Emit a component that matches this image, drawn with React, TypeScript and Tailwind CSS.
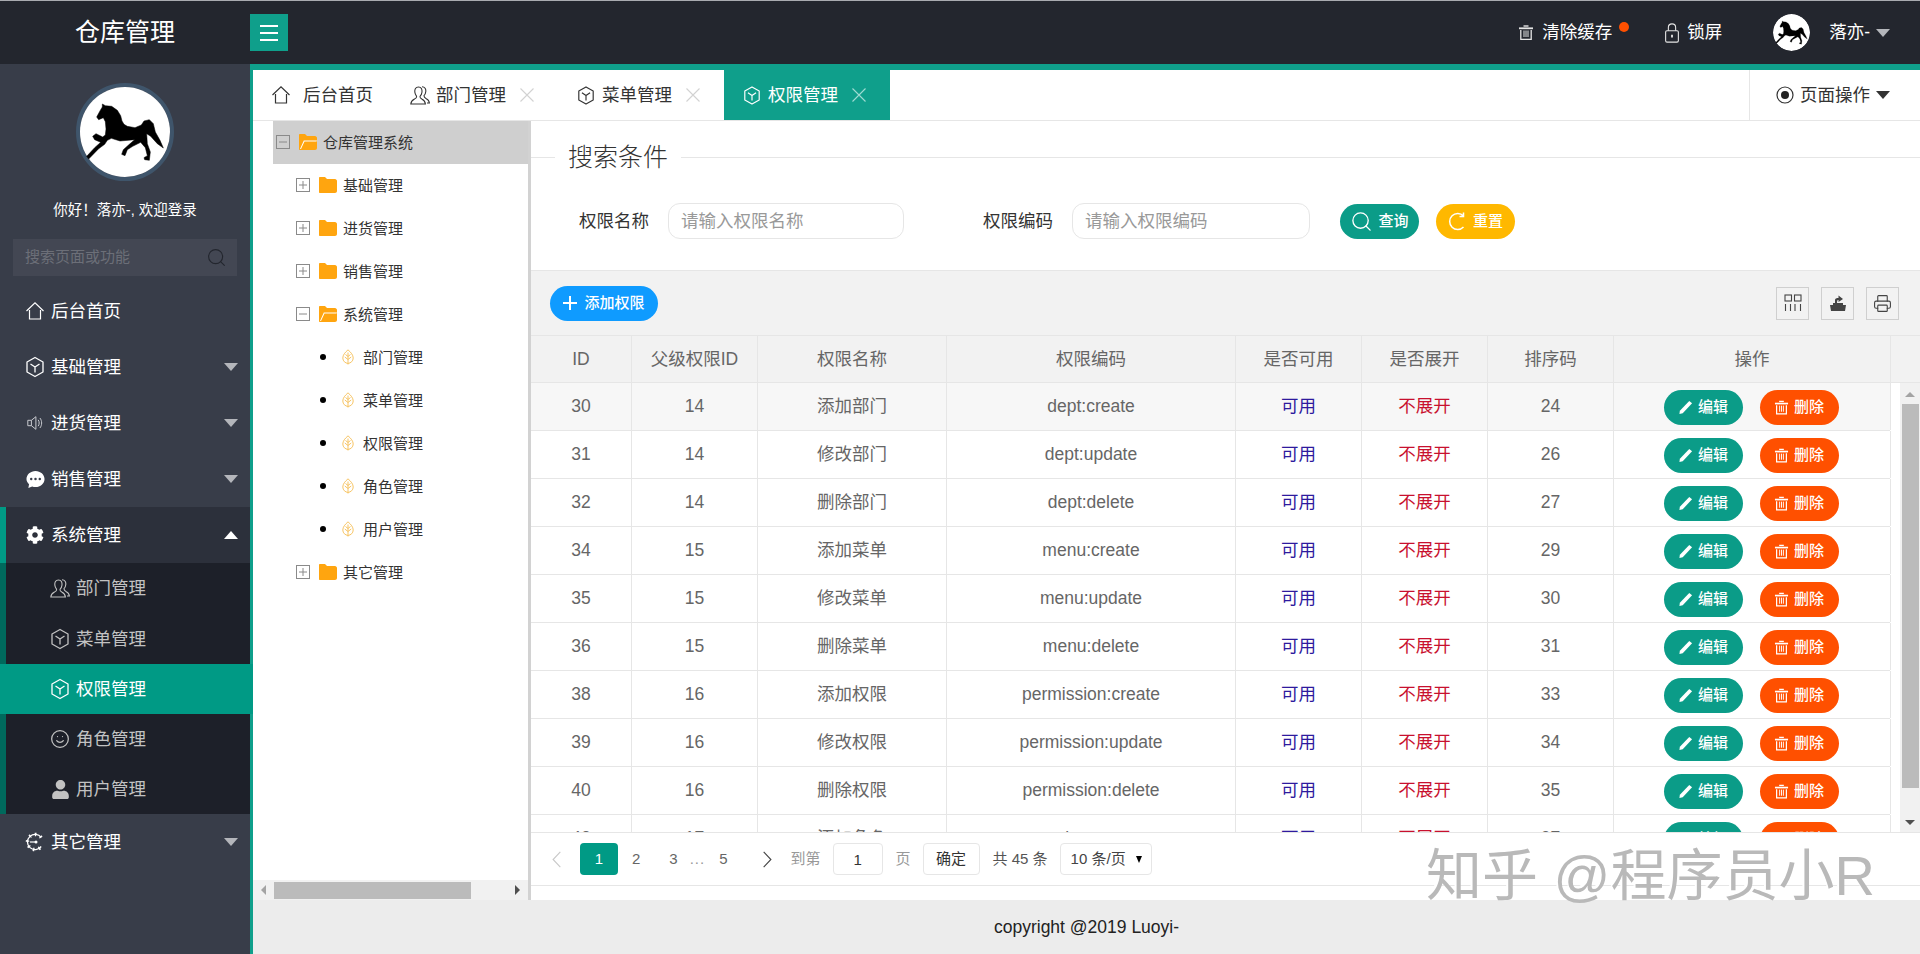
import { Printer, Search, Smile } from "lucide-react";
import { FaCog, FaUser } from "react-icons/fa";
import type { ReactNode } from "react";

function Horse({ className }: { className?: string }) {
  return (
    <svg viewBox="30 20 270 270" className={className}>
      <circle cx="165" cy="155" r="135" fill="#fff" />
      <path
        d="M80 110 L92 88 L97 80 L97 71 L106 76 L125 78 L142 90 L152 106 L156 122 L162 132 L172 138 L195 142 L214 134 L222 122 L238 118 L250 130 L256 155 L270 180 L280 203 L262 190 L242 168 L230 160 L232 190 L241 215 L238 240 L224 238 L222 232 L232 226 L226 202 L212 186 L188 198 L172 208 L165 226 L155 222 L160 208 L178 192 L194 178 L150 182 L124 174 L112 180 L104 192 L86 205 L56 236 L50 228 L74 202 L92 186 L74 178 L68 168 L78 160 L98 170 L106 164 L108 146 L106 124 L100 112 L86 118 Z"
        fill="#000"
        stroke="#000"
        strokeWidth="1.5"
        strokeLinejoin="round"
      />
    </svg>
  );
}

function HomeIcon({ className }: { className?: string }) {
  return (
    <svg viewBox="0 0 20 20" fill="none" stroke="currentColor" strokeWidth="1.2" className={className}>
      <path d="M1.5 10 L10 1.8 L18.5 10" />
      <path d="M4.5 9 V18 H15.5 V9" />
    </svg>
  );
}

function CubeIcon({ className }: { className?: string }) {
  return (
    <svg viewBox="0 0 20 22" fill="none" stroke="currentColor" strokeWidth="1.3" strokeLinejoin="round" className={className}>
      <path d="M10 1.5 L18 6 V16 L10 20.5 L2 16 V6 Z" />
      <path d="M5.5 8 L10 11 L14.5 8 M10 11 V16.5" />
    </svg>
  );
}

function UsersIcon({ className }: { className?: string }) {
  return (
    <svg viewBox="0 0 20 20" fill="none" stroke="currentColor" strokeWidth="1.1" className={className}>
      <path d="M8.5 1.5 C5.5 1.5 4.6 4 4.8 6.5 C5 8.6 6 10 6.6 10.8 C6.8 12 6 12.8 4.5 13.6 C2.5 14.6 1 16 .8 18.5 H15.4 C15.2 16 13.8 14.6 11.8 13.6 C10.4 12.8 9.8 12 10 10.8 C10.8 10 11.8 8.6 12 6.5 C12.2 4 11.4 1.5 8.5 1.5 Z" />
      <path d="M12 1.2 C15 1.2 16 3.6 15.8 6 C15.6 8 14.8 9.4 14 10.2 C14 11.4 14.8 12.2 16 12.9 C18 13.9 19.2 15.4 19.4 17.5 H17" />
    </svg>
  );
}

function SpeakerIcon({ className }: { className?: string }) {
  return (
    <svg viewBox="0 0 20 20" fill="none" stroke="currentColor" strokeWidth="1.1" className={className}>
      <path d="M2 7 H6 L11 3 V17 L6 13 H2 Z" />
      <path d="M6 7 V13" />
      <path d="M13.5 6.5 C15 8.5 15 11.5 13.5 13.5 M15.5 4.5 C18 7.5 18 12.5 15.5 15.5" />
    </svg>
  );
}

function ChatIcon({ className }: { className?: string }) {
  return (
    <svg viewBox="0 0 20 20" className={className}>
      <path d="M10 1 C15.2 1 19.5 4.8 19.5 9.5 C19.5 14.2 15.2 18 10 18 C8.8 18 7.6 17.8 6.5 17.4 L2.5 19 L3.2 15 C1.5 13.5 .5 11.6 .5 9.5 C.5 4.8 4.8 1 10 1 Z" fill="currentColor" />
      <circle cx="5.5" cy="9.5" r="1.3" fill="#383d49" />
      <circle cx="10" cy="9.5" r="1.3" fill="#383d49" />
      <circle cx="14.5" cy="9.5" r="1.3" fill="#383d49" />
    </svg>
  );
}

function EngineIcon({ className }: { className?: string }) {
  return (
    <svg viewBox="0 0 20 20" fill="none" stroke="currentColor" className={className}>
      <path d="M16.2 5.5 A7.6 7.6 0 1 0 16.2 14.5" strokeWidth="1.3" />
      <path d="M16.2 5.5 A7.6 7.6 0 1 0 16.2 14.5" strokeWidth="3.5" strokeDasharray="1.5 4.2" />
      <path d="M5 10 H10" strokeWidth="1.2" />
      <circle cx="11" cy="10" r="1.5" fill="currentColor" stroke="none" />
    </svg>
  );
}

function TrashIcon({ className }: { className?: string }) {
  return (
    <svg viewBox="0 0 16 16" fill="none" stroke="currentColor" className={className}>
      <path d="M5.5 1.5 H10.5" strokeWidth="1.4" />
      <path d="M1 3.8 H15" strokeWidth="1.8" />
      <path d="M2.8 5.5 V14.8 H13.2 V5.5" strokeWidth="1.3" />
      <path d="M6 6 V12.5 M8 6 V12.5 M10 6 V12.5" strokeWidth="1" />
    </svg>
  );
}

function PencilIcon({ className }: { className?: string }) {
  return (
    <svg viewBox="0 0 16 16" className={className}>
      <path d="M12 1 L15 3.5 L5 14 L1.5 15 L2 11.5 Z" fill="currentColor" />
    </svg>
  );
}

function LockIcon({ className }: { className?: string }) {
  return (
    <svg viewBox="0 0 16 22" fill="none" stroke="currentColor" strokeWidth="1.2" className={className}>
      <rect x="1" y="8.5" width="14" height="12.5" rx="1.5" />
      <path d="M4 8.5 V5 C4 2.5 5.8 1 8 1 C10.2 1 12 2.5 12 5 V8.5" />
      <path d="M8 13 V16" strokeWidth="2" />
    </svg>
  );
}

function ColsIcon({ className }: { className?: string }) {
  return (
    <svg viewBox="0 0 18 18" fill="none" stroke="currentColor" strokeWidth="1.1" className={className}>
      <rect x="1" y="1" width="6.5" height="6" />
      <rect x="10.5" y="1" width="6.5" height="6" />
      <path d="M1.5 10 V17 M6.5 10 V17 M11 10 V17 M16.5 10 V17" />
    </svg>
  );
}

function ExportIcon({ className }: { className?: string }) {
  return (
    <svg viewBox="0 0 18 18" className={className}>
      <path d="M1 11 H4 V9 H14 V11 H17 L16 17 H2 Z" fill="currentColor" />
      <path d="M6 9 V6 C6 4.5 7.5 4 9.5 4 V1.5 L14 5 L9.5 8 V6 C8.5 6 8 6.5 8 9" fill="currentColor" />
    </svg>
  );
}

function CloseIcon({ className }: { className?: string }) {
  return (
    <svg viewBox="0 0 14 14" fill="none" stroke="currentColor" strokeWidth="1.1" className={className}>
      <path d="M.5 .5 L13.5 13.5 M13.5 .5 L.5 13.5" />
    </svg>
  );
}

function LeafIcon() {
  return (
    <svg viewBox="0 0 12 16" fill="none" stroke="#f7c566" strokeWidth="1" className="h-[16px] w-[12px]">
      <path d="M6 .8 C9 3.5 11.2 6 11.2 9 C11.2 12.2 8.8 14 6 14.5 C3.2 14 .8 12.2 .8 9 C.8 6 3 3.5 6 .8 Z" />
      <path d="M6 3.5 V15.5 M6 7.5 L8.5 5.5 M6 7.5 L3.5 5.5 M6 10.5 L9.2 8 M6 10.5 L2.8 8" />
    </svg>
  );
}

function Folder({ open }: { open?: boolean }) {
  return (
    <svg viewBox="0 0 19 16" className="mb-[2px] h-[16px] w-[19px] shrink-0">
      <path d="M1 1 C1 .4 1.4 0 2 0 H7 L9 2 H17 C18 2 19 3 19 4 V14 C19 15 18 16 17 16 H2 C1.4 16 1 15.6 1 15 Z" fill="#ffa50f" />
      {open && <path d="M3 15 L6.5 7.5 H18.5 L19 6.5 H5.8 L2 15 Z" fill="#fff" />}
    </svg>
  );
}

function Expander({ open }: { open?: boolean }) {
  return (
    <svg viewBox="0 0 14 14" className="mb-[2px] h-[14px] w-[14px] shrink-0" fill="none" stroke="#8a8a8a">
      <rect x=".5" y=".5" width="13" height="13" />
      <path d="M3 7 H11" />
      {!open && <path d="M7 3 V11" />}
    </svg>
  );
}

function Caret({ up, className }: { up?: boolean; className?: string }) {
  return (
    <span
      className={`h-0 w-0 border-x-[7px] border-x-transparent ${up ? "border-b-[8px] border-b-white" : "border-t-[8px] border-t-[#b4b6bb]"} ${className ?? ""}`}
    />
  );
}

function Menu({ icon, label, open, active, leaf }: { icon: ReactNode; label: string; open?: boolean; active?: boolean; leaf?: boolean }) {
  return (
    <div className={`flex h-14 items-center pr-[12px] ${active ? "border-l-[6px] border-l-[#009a85] bg-[#2c303b] pl-[19px]" : "pl-[25px]"}`}>
      <span className="flex w-5 justify-center text-white">{icon}</span>
      <span className="ml-[6px] text-[17.5px] text-white">{label}</span>
      {!leaf && <Caret up={open} className="ml-auto" />}
    </div>
  );
}

function SubMenu({ icon, label, active, first }: { icon: ReactNode; label: string; active?: boolean; first?: boolean }) {
  return (
    <div
      className={`flex items-center ${first ? "h-[51px]" : "h-[50px]"} ${active ? "-mr-[3px] bg-[#009a85] pl-[50px] text-white" : "border-l-[6px] border-l-[#00695c] bg-[#1d2029] pl-[44px] text-[#c2c2c2]"}`}
    >
      <span className="flex w-5 justify-center">{icon}</span>
      <span className="ml-[6px] text-[17.5px]">{label}</span>
    </div>
  );
}

function Sidebar() {
  return (
    <aside className="z-10 flex w-[253px] shrink-0 flex-col border-r-[3px] border-r-[#0f9f8b] bg-[#383d49] pt-[19px]">
      <div className="mx-auto h-[98px] w-[98px] rounded-full border-4 border-[#3f556b]">
        <Horse className="h-full w-full" />
      </div>
      <div className="mt-[19px] h-5 text-center text-[14.5px] leading-5 text-white">你好！落亦-, 欢迎登录</div>
      <div className="mx-[13px] mt-[19px] flex h-[37px] items-center bg-[#434753] pl-3 pr-[10px]">
        <input
          placeholder="搜索页面或功能"
          className="w-full bg-transparent text-[15px] outline-none placeholder:text-[#6c6f78]"
        />
        <Search className="h-[21px] w-[21px] shrink-0 text-[#23262e]" strokeWidth={1.3} />
      </div>
      <nav className="mt-[7px]">
        <Menu leaf icon={<HomeIcon className="h-5 w-5" />} label="后台首页" />
        <Menu icon={<CubeIcon className="h-[22px] w-5" />} label="基础管理" />
        <Menu icon={<SpeakerIcon className="h-[18px] w-[18px] text-[#c9cbd0]" />} label="进货管理" />
        <Menu icon={<ChatIcon className="h-[19px] w-[19px]" />} label="销售管理" />
        <Menu icon={<FaCog className="h-[18px] w-[18px]" />} label="系统管理" open active />
        <SubMenu first icon={<UsersIcon className="h-[21px] w-5" />} label="部门管理" />
        <SubMenu icon={<CubeIcon className="h-[22px] w-5" />} label="菜单管理" />
        <SubMenu icon={<CubeIcon className="h-[22px] w-5" />} label="权限管理" active />
        <SubMenu icon={<Smile className="h-6 w-6" strokeWidth={1.5} />} label="角色管理" />
        <SubMenu icon={<FaUser className="h-[19px] w-[19px]" />} label="用户管理" />
        <Menu icon={<EngineIcon className="h-5 w-5" />} label="其它管理" />
      </nav>
    </aside>
  );
}

function Header() {
  return (
    <header className="flex h-16 shrink-0 items-center border-t border-t-[#a9abb0] bg-[#23262e] text-white">
      <div className="w-[250px] text-center text-[25px]">仓库管理</div>
      <button className="flex h-[37px] w-[38px] flex-col items-center justify-center gap-[5px] bg-[#0f9f8b]">
        <i className="h-[2px] w-[18px] bg-white" />
        <i className="h-[2px] w-[18px] bg-white" />
        <i className="h-[2px] w-[18px] bg-white" />
      </button>
      <div className="ml-auto flex items-center pr-[30px]">
        <TrashIcon className="h-[17px] w-[16px] text-[#e5e5e5]" />
        <span className="ml-[8px] text-[17.5px]">清除缓存</span>
        <i className="mb-[11px] ml-[7px] h-[10px] w-[10px] rounded-full bg-[#ff5000]" />
        <LockIcon className="ml-[35px] h-[20px] w-[16px] text-[#e5e5e5]" />
        <span className="ml-[7px] text-[17.5px]">锁屏</span>
        <Horse className="ml-[51px] h-[37px] w-[37px] rounded-full" />
        <span className="ml-[19px] text-[17.5px]">落亦-</span>
        <Caret className="ml-[6px]" />
      </div>
    </header>
  );
}

function Tab({ icon, label, home, active }: { icon: ReactNode; label: string; home?: boolean; active?: boolean }) {
  return (
    <div
      className={`flex h-[50px] items-center pl-[18px] text-[17.5px] ${home ? "w-[139px]" : "w-[166px]"} ${active ? "bg-[#0f9f8b] text-white" : "text-[#333]"}`}
    >
      <span className="flex w-5 justify-center">{icon}</span>
      <span className={home ? "ml-[12px]" : "ml-[6px]"}>{label}</span>
      {!home && <CloseIcon className={`ml-[14px] h-[14px] w-[14px] ${active ? "text-[#9fdcd3]" : "text-[#d2d2d2]"}`} />}
    </div>
  );
}

function Tree() {
  const row = "flex h-[43px] items-center text-[15px] text-[#333]";
  const groups: [string, boolean][] = [
    ["基础管理", false],
    ["进货管理", false],
    ["销售管理", false],
    ["系统管理", true],
  ];
  const leaves = ["部门管理", "菜单管理", "权限管理", "角色管理", "用户管理"];
  return (
    <div className="flex w-[278px] shrink-0 flex-col border-r-[3px] border-r-[#d2d2d2]">
      <div className="flex-1 pl-5">
        <div className={`${row} bg-[#cfcfcf] pl-[3px]`}>
          <Expander open />
          <span className="ml-2 flex">
            <Folder open />
          </span>
          <span className="ml-[6px] mt-[2px]">仓库管理系统</span>
        </div>
        {groups.map(([name, open]) => (
          <div key={name} className={`${row} pl-[23px]`}>
            <Expander open={open} />
            <span className="ml-2 flex">
              <Folder open={open} />
            </span>
            <span className="ml-[6px] mt-[2px]">{name}</span>
          </div>
        ))}
        {leaves.map((name) => (
          <div key={name} className={`${row} pl-[47px]`}>
            <i className="mb-[2px] h-[6px] w-[6px] rounded-full bg-black" />
            <span className="mb-[2px] ml-4 flex">
              <LeafIcon />
            </span>
            <span className="ml-[9px] mt-[2px]">{name}</span>
          </div>
        ))}
        <div className={`${row} pl-[23px]`}>
          <Expander />
          <span className="ml-2 flex">
            <Folder />
          </span>
          <span className="ml-[6px] mt-[2px]">其它管理</span>
        </div>
      </div>
      <div className="flex h-5 items-center bg-[#f1f1f1]">
        <i className="ml-[8px] h-0 w-0 border-y-[5px] border-r-[5px] border-y-transparent border-r-[#a3a3a3]" />
        <i className="ml-[8px] h-[17px] w-[197px] bg-[#bbb]" />
        <i className="ml-[44px] h-0 w-0 border-y-[5px] border-l-[5px] border-y-transparent border-l-[#505050]" />
      </div>
    </div>
  );
}

function Pill({ color, icon, label, className }: { color: string; icon: ReactNode; label: string; className?: string }) {
  return (
    <button className={`flex h-[35px] w-[79px] items-center justify-center rounded-full text-[15px] font-medium text-white ${color} ${className ?? ""}`}>
      {icon}
      <span className="ml-[5px]">{label}</span>
    </button>
  );
}

function SearchBar() {
  return (
    <section className="h-[150px] shrink-0 border-b border-b-[#e6e6e6]">
      <div className="flex items-center pt-[21px]">
        <i className="h-px w-6 bg-[#e6e6e6]" />
        <span className="mx-[13px] text-[25px] leading-[30px] font-light text-[#333]">搜索条件</span>
        <i className="h-px flex-1 bg-[#e6e6e6]" />
      </div>
      <div className="mt-[31px] flex items-center text-[17.5px] text-[#333]">
        <span className="ml-[48px]">权限名称</span>
        <input
          placeholder="请输入权限名称"
          className="ml-[19px] h-[36px] w-[236px] rounded-xl border border-[#e6e6e6] pl-3 outline-none placeholder:text-[#999]"
        />
        <span className="ml-[79px]">权限编码</span>
        <input
          placeholder="请输入权限编码"
          className="ml-[19px] h-[36px] w-[238px] rounded-xl border border-[#e6e6e6] pl-3 outline-none placeholder:text-[#999]"
        />
        <Pill
          className="ml-[30px]"
          color="bg-[#0b9c88]"
          icon={<Search className="h-[23px] w-[23px]" strokeWidth={1.4} />}
          label="查询"
        />
        <Pill
          className="ml-[17px]"
          color="bg-[#ffb800]"
          icon={
            <svg viewBox="0 0 20 20" fill="none" stroke="currentColor" strokeWidth="1.5" className="h-[21px] w-[20px]">
              <path d="M15.5 4.5 A8 8 0 1 0 15.5 15.5 M15.5 1 V5 H11.5" />
            </svg>
          }
          label="重置"
        />
      </div>
    </section>
  );
}

const COLS = "grid grid-cols-[101px_126px_189px_289px_126px_126px_126px_277px]";
const HEADS = ["ID", "父级权限ID", "权限名称", "权限编码", "是否可用", "是否展开", "排序码", "操作"];
const ROWS: [number, number, string, string, number][] = [
  [30, 14, "添加部门", "dept:create", 24],
  [31, 14, "修改部门", "dept:update", 26],
  [32, 14, "删除部门", "dept:delete", 27],
  [34, 15, "添加菜单", "menu:create", 29],
  [35, 15, "修改菜单", "menu:update", 30],
  [36, 15, "删除菜单", "menu:delete", 31],
  [38, 16, "添加权限", "permission:create", 33],
  [39, 16, "修改权限", "permission:update", 34],
  [40, 16, "删除权限", "permission:delete", 35],
  [42, 17, "添加角色", "role:create", 37],
];

function Cell({ children, className }: { children: ReactNode; className?: string }) {
  return <div className={`flex h-[47px] items-center justify-center border-r border-r-[#e6e6e6] ${className ?? ""}`}>{children}</div>;
}

function DataTable() {
  return (
    <div className="flex min-h-0 flex-1 flex-col">
      <div className="flex h-[48px] shrink-0 border-y border-[#e6e6e6] bg-[#f2f2f2] text-[17.5px] text-[#666]">
        <div className={COLS}>
          {HEADS.map((h) => (
            <Cell key={h} className="h-[46px]">
              {h}
            </Cell>
          ))}
        </div>
      </div>
      <div className="flex min-h-0 flex-1 overflow-hidden">
        <div className="w-[1359px] shrink-0 text-[17.5px] text-[#666]">
          {ROWS.map((r, i) => (
            <div key={r[0]} className={`${COLS} border-b border-b-[#e6e6e6] ${i === 0 ? "bg-[#f7f7f7]" : ""}`}>
              <Cell>{r[0]}</Cell>
              <Cell>{r[1]}</Cell>
              <Cell>{r[2]}</Cell>
              <Cell>{r[3]}</Cell>
              <Cell className="text-[#2e1a9e]">可用</Cell>
              <Cell className="text-[#c8102e]">不展开</Cell>
              <Cell>{r[4]}</Cell>
              <Cell className="gap-[17px] pr-[2px]">
                <Pill
                  color="bg-[#0b9c88]"
                  icon={<PencilIcon className="h-[15px] w-[15px]" />}
                  label="编辑"
                  className="mt-[1px]"
                />
                <Pill
                  color="bg-[#ff5000]"
                  icon={<TrashIcon className="h-[15px] w-[15px]" />}
                  label="删除"
                  className="mt-[1px]"
                />
              </Cell>
            </div>
          ))}
        </div>
        <div className="ml-[10px] flex w-5 flex-col items-center bg-[#f1f1f1] pt-[9px]">
          <i className="h-0 w-0 border-x-[5px] border-b-[5px] border-x-transparent border-b-[#a3a3a3]" />
          <i className="mt-[7px] h-[384px] w-[17px] bg-[#bbb]" />
          <i className="mt-[32px] h-0 w-0 border-x-[5px] border-t-[5px] border-x-transparent border-t-[#505050]" />
        </div>
      </div>
    </div>
  );
}

function Pager() {
  return (
    <div className="shrink-0 border-t border-t-[#e6e6e6] pb-[14px]">
      <div className="flex h-[53px] items-center border-b border-b-[#e6e6e6] text-[15px] text-[#666]">
        <svg viewBox="0 0 11 20" fill="none" stroke="#c8c8c8" strokeWidth="1.3" className="ml-[20px] h-[17px] w-[11px]">
          <path d="M10 1 L1.5 10 L10 19" />
        </svg>
        <span className="ml-[18px] flex h-8 w-[38px] items-center justify-center rounded-sm bg-[#009a85] text-white">1</span>
        <span className="ml-[14px]">2</span>
        <span className="ml-[29px]">3</span>
        <span className="ml-[12px] tracking-[1px] text-[#999]">...</span>
        <span className="ml-[14px]">5</span>
        <svg viewBox="0 0 11 20" fill="none" stroke="#444" strokeWidth="1.3" className="ml-[34px] h-[17px] w-[11px]">
          <path d="M1 1 L9.5 10 L1 19" />
        </svg>
        <span className="ml-[18px] text-[#999]">到第</span>
        <input
          defaultValue="1"
          className="ml-[12px] h-8 w-[50px] rounded-sm border border-[#e6e6e6] text-center text-[#333] outline-none"
        />
        <span className="ml-[13px] text-[#999]">页</span>
        <button className="ml-[12px] h-8 w-[57px] rounded-sm border border-[#e6e6e6] text-[#333]">确定</button>
        <span className="ml-[13px] text-[#555]">共 45 条</span>
        <span className="ml-[12px] flex h-8 w-[92px] items-center rounded-sm border border-[#e6e6e6] pl-[10px] text-[#444]">
          10 条/页
          <i className="ml-[10px] h-0 w-0 border-x-[3.5px] border-t-[7px] border-x-transparent border-t-black" />
        </span>
      </div>
    </div>
  );
}

export default function App() {
  return (
    <div className="relative flex h-[954px] w-[1920px] flex-col overflow-hidden bg-white font-['Liberation_Sans','Noto_Sans_CJK_SC',sans-serif]">
      <Header />
      <div className="flex min-h-0 flex-1">
        <Sidebar />
        <main className="flex min-w-0 flex-1 flex-col border-t-[6px] border-t-[#0f9f8b]">
          <div className="flex h-[51px] shrink-0 border-b border-b-[#e6e6e6]">
            <Tab home icon={<HomeIcon className="h-5 w-5" />} label="后台首页" />
            <Tab icon={<UsersIcon className="h-[21px] w-5" />} label="部门管理" />
            <Tab icon={<CubeIcon className="h-[21px] w-[18px]" />} label="菜单管理" />
            <Tab active icon={<CubeIcon className="h-[21px] w-[18px]" />} label="权限管理" />
            <div className="ml-auto flex w-[171px] items-center border-l border-l-[#e6e6e6] pl-[26px] text-[17.5px] text-[#333]">
              <svg viewBox="0 0 18 18" className="h-[18px] w-[18px]" fill="none" stroke="#333">
                <circle cx="9" cy="9" r="8" strokeWidth="1.2" />
                <circle cx="9" cy="9" r="4" fill="#222" stroke="none" />
              </svg>
              <span className="ml-[6px]">页面操作</span>
              <span className="ml-[6px] h-0 w-0 border-x-[7px] border-t-[8px] border-x-transparent border-t-[#333]" />
            </div>
          </div>
          <div className="flex h-[779px] shrink-0">
            <Tree />
            <div className="flex min-w-0 flex-1 flex-col">
              <SearchBar />
              <div className="flex h-[64px] shrink-0 items-center bg-[#f2f2f2] pl-[19px] pr-[21px]">
                <button className="flex h-[35px] w-[108px] items-center justify-center rounded-full bg-[#0f9bff] text-[15px] font-medium text-white">
                  <svg viewBox="0 0 14 14" className="h-[14px] w-[14px]" stroke="currentColor" strokeWidth="2">
                    <path d="M7 0 V14 M0 7 H14" />
                  </svg>
                  <span className="ml-[7px]">添加权限</span>
                </button>
                <div className="ml-auto flex gap-3 text-[#444]">
                  <span className="flex h-[33px] w-[33px] items-center justify-center border border-[#cfcfcf]">
                    <ColsIcon className="h-[18px] w-[18px]" />
                  </span>
                  <span className="flex h-[33px] w-[33px] items-center justify-center border border-[#cfcfcf]">
                    <ExportIcon className="h-[18px] w-[18px]" />
                  </span>
                  <span className="flex h-[33px] w-[33px] items-center justify-center border border-[#cfcfcf]">
                    <Printer className="h-[19px] w-[19px]" strokeWidth={1.4} />
                  </span>
                </div>
              </div>
              <DataTable />
              <Pager />
            </div>
          </div>
          <footer className="flex flex-1 items-center justify-center bg-[#ececec] text-[17.5px] text-[#222]">
            copyright @2019 Luoyi-
          </footer>
        </main>
      </div>
      <div className="pointer-events-none absolute left-[1426px] top-[842px] whitespace-nowrap text-[56px] leading-[68px] text-[#b9b9b9] [text-shadow:-2px_-2px_0_#ffffff]">
        知乎 @程序员小R
      </div>
    </div>
  );
}
